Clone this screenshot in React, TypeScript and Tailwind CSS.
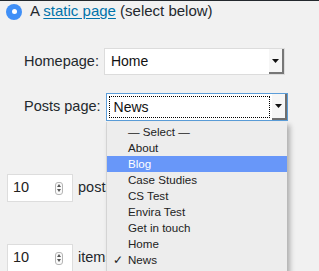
import React from "react";

const font = { fontFamily: '"Liberation Sans", Arial, sans-serif' };

function Arrow() {
  return (
    <svg width="7" height="4" viewBox="0 0 7 4">
      <path d="M0 0h7L3.5 4z" fill="#111" />
    </svg>
  );
}

function Spinner() {
  return (
    <div className="flex h-[13px] w-[8px] flex-col items-center justify-center gap-[2px] rounded-[3px] border border-[#b5b5b5] bg-[#fafafa]">
      <svg width="4" height="3" viewBox="0 0 4 3">
        <path d="M0 3L2 0l2 3z" fill="#555" />
      </svg>
      <svg width="4" height="3" viewBox="0 0 4 3">
        <path d="M0 0h4L2 3z" fill="#555" />
      </svg>
    </div>
  );
}

function NumberBox() {
  return (
    <div className="flex h-[28px] w-[66px] items-center justify-between border border-[#dddddd] bg-white pl-[5px] pr-[9px] text-[14.5px] text-[#222]">
      <span>10</span>
      <Spinner />
    </div>
  );
}

const pages = [
  "— Select —",
  "About",
  "Blog",
  "Case Studies",
  "CS Test",
  "Envira Test",
  "Get in touch",
  "Home",
  "News",
  "Sample Page",
];

export default function App() {
  return (
    <div
      style={font}
      className="relative h-[271px] w-[319px] overflow-hidden border-t border-[#23282d] bg-[#f1f1f1] text-[#23282d]"
    >
      {/* radio row */}
      <div className="flex h-[21px] items-center gap-[8px] pl-[6px] text-[15px]">
        <div className="flex h-[16px] w-[16px] items-center justify-center rounded-full bg-[#3f8ff7]">
          <div className="h-[5px] w-[5px] rounded-full bg-white" />
        </div>
        <span>
          A{" "}
          <span className="text-[#0073aa] underline underline-offset-2">static page</span>{" "}
          (select below)
        </span>
      </div>

      {/* homepage */}
      <div className="mt-[26px] flex items-center gap-[5px] pl-[24px] text-[14.5px]">
        <span>Homepage:</span>
        <div className="flex h-[27px] w-[181px] border border-[#dcdcdc] bg-white">
          <div className="flex flex-1 items-center pl-[6px] text-[14px] text-[#111]">Home</div>
          <div className="flex w-[15px] items-center justify-center border-r-2 border-b-2 border-[#777] bg-[#f6f6f6]">
            <Arrow />
          </div>
        </div>
      </div>

      {/* posts page */}
      <div className="mt-[18px] flex items-center gap-[5px] pl-[24px] text-[14.5px]">
        <span>Posts page:</span>
        <div className="flex h-[28px] w-[182px] border border-[#5b9dd9] bg-white">
          <div className="m-[2px] flex flex-1 items-center border border-dotted border-black pl-[4px] text-[14px] text-[#111]">
            News
          </div>
          <div className="flex w-[15px] items-center justify-center border-r-2 border-b-2 border-[#6f6f6f] bg-[#f6f6f6]">
            <Arrow />
          </div>
        </div>
      </div>

      {/* per page inputs */}
      <div className="mt-[53px] flex items-center gap-[5px] pl-[7px] text-[14.5px]">
        <NumberBox />
        <span>posts</span>
      </div>
      <div className="mt-[42px] flex items-center gap-[5px] pl-[7px] text-[14.5px]">
        <NumberBox />
        <span>items</span>
      </div>

      {/* open dropdown list */}
      <div className="absolute left-[106px] top-[121px] w-[181px] border-l border-[#d4d4d4] bg-[#ededed] pt-[2px] text-[11.6px] text-[#222] shadow-[3px_3px_5px_rgba(0,0,0,0.28)]">
        {pages.map((p) => (
          <div
            key={p}
            className={
              p === "Blog"
                ? "relative h-[16px] bg-[#6897f9] pl-[21px] leading-[16px] text-white"
                : "relative h-[16px] pl-[21px] leading-[16px]"
            }
          >
            {p === "News" && <span className="absolute left-[6px] top-0">✓</span>}
            {p}
          </div>
        ))}
      </div>
    </div>
  );
}
